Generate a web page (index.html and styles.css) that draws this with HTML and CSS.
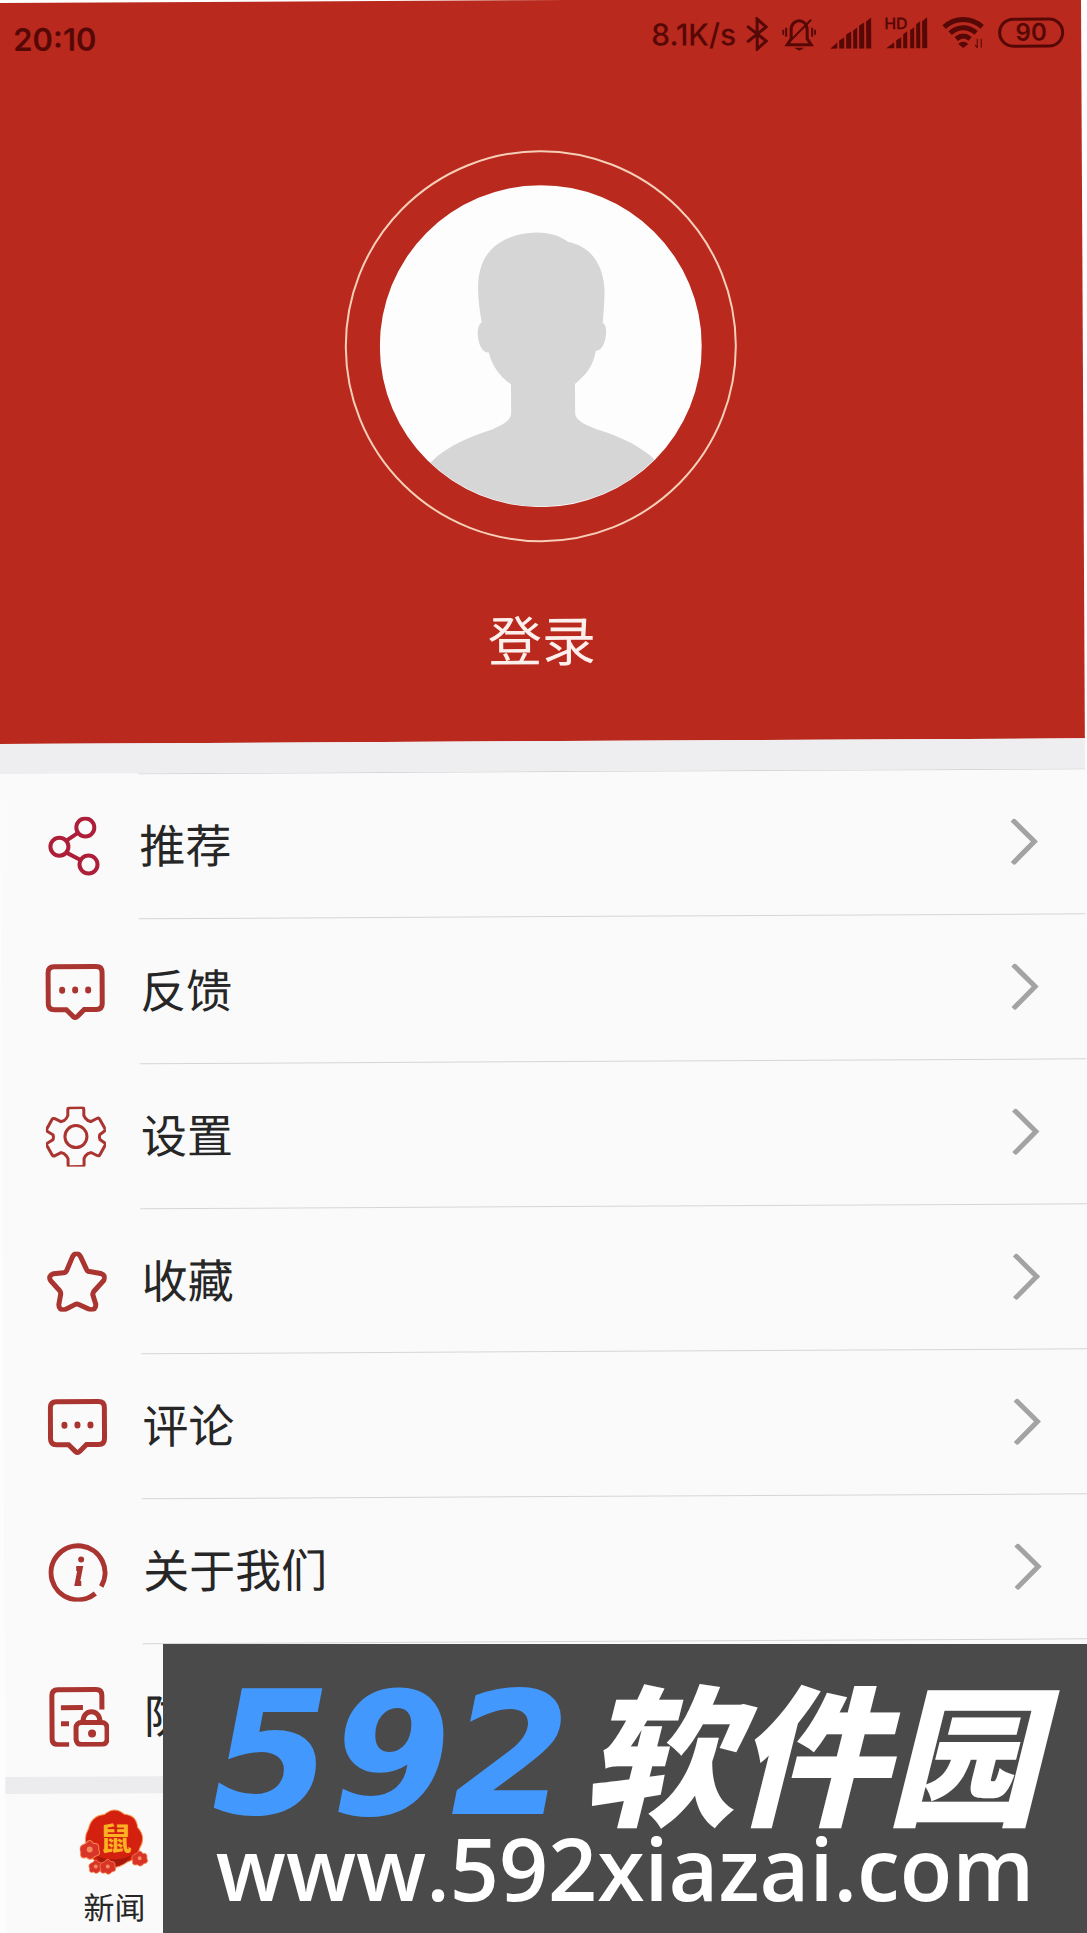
FILE: index.html
```
<!DOCTYPE html>
<html lang="zh-CN">
<head>
  <meta charset="UTF-8" />
  <meta name="viewport" content="width=device-width, initial-scale=1" />
  <title>我的</title>
  <link rel="stylesheet" href="styles.css">
</head>
<body>

  <div class="app">
    <header class="profile">
      <div class="status">
        <span class="time">20:10</span>
        <div class="status-icons">
          <span class="speed">8.1K/s</span>
          <svg width="22" height="34" viewBox="0 0 22 34" fill="none" stroke="currentColor" stroke-width="3"><path d="M1 9l19 15-9 8V2l9 8L1 25"/></svg>
          <svg width="34" height="34" viewBox="0 0 34 34" fill="none" stroke="currentColor" stroke-width="3"><path d="M9 22V13c0-12 16-12 16 0v9l4 6H5l4-6z"/><path d="M5 27L29 3M4 11v9M30 11v9M1 13v5M33 13v5" stroke-width="2"/><path d="M12 31h10l-5 3z" fill="currentColor" stroke="none"/></svg>
          <svg width="42" height="32" viewBox="0 0 42 32" fill="currentColor"><path d="M0 31l7-6v6zM9 31v-8l5-3v11zM16 31V17l5-3v17zM23 31V13l4-3v21zM29 31V8l5-3v26zM36 31V4l5-4v31z"/></svg>
          <span class="hd">
            <svg width="42" height="32" viewBox="0 0 42 32" fill="currentColor"><path d="M0 31l8-6v6zM10 31v-8l5-3v11zM17 31V17l4-3v17zM24 31V13l4-3v21zM30 31V7l4-3v27zM36 31V4l5-4v31z"/></svg>
            <small>HD</small>
          </span>
          <svg width="42" height="34" viewBox="0 0 42 34" fill="none" stroke="currentColor" stroke-width="5"><path d="M2 11c11-10 27-10 38 0M8 17c8-7 18-7 26 0M14 23c5-4 9-4 14 0"/><path d="M16 28c3-3 7-3 10 0l-5 4z" fill="currentColor" stroke="none"/><path d="M35 23v9M33 29l2 3M39 32v-9" stroke-width="1"/></svg>
          <span class="battery">90</span>
        </div>
      </div>

      <a class="login" href="#login">
        <span class="ring">
          <svg class="avatar" viewBox="0 0 322 322">
            <circle cx="161" cy="161" r="161" fill="#fdfdfd"/>
            <path fill="#d7d6d7" d="M50 277C66 260 90 251 112 244C122 240 131 235 131 228V199C121 192 112 181 109 167C102 168 98 157 98 148C98 142 100 138 102 137C96 102 97 80 112 64C130 46 168 41 189 57C210 61 224 78 225 105C225 117 224 127 223 138C226 140 227 144 226 151C225 160 221 166 216 166C213 182 206 190 195 199V228C195 236 208 241 218 245C243 253 262 263 274 275A161 161 0 0 1 50 277z"/>
          </svg>
        </span>
        <span class="login-text">登录</span>
      </a>
    </header>

    <nav class="menu">
      <a href="#share">
        <svg class="icon share" viewBox="0 0 60 60"><circle cx="15" cy="30" r="9"/><circle cx="41" cy="11" r="9"/><circle cx="44" cy="48" r="9"/><path d="M22 24L34 16M22 36l15 8"/></svg>
        <span>推荐</span>
        <svg class="arrow" viewBox="0 0 28 46"><path d="M2 1l22 22L2 45"/></svg>
      </a>
      <a href="#feedback">
        <svg class="icon" viewBox="0 0 60 60"><path d="M9 5h42q6 0 6 6v31q0 6-6 6H39l-7 7q-2 2-4 0l-7-7H9q-6 0-6-6V11q0-6 6-6z"/><path class="dots" d="M17 28v1M30 28v1M43 28v1"/></svg>
        <span>反馈</span>
        <svg class="arrow" viewBox="0 0 28 46"><path d="M2 1l22 22L2 45"/></svg>
      </a>
      <a href="#settings">
        <svg class="icon thin" viewBox="0 0 60 60"><path d="M24 1h12q2 0 2 2v6q1 3 4 5l3 1 6-3q2-1 3 1l5 9q1 2-1 3l-4 3q-1 2 0 5l4 3q2 1 1 3l-5 9q-1 2-3 1l-6-3-3 1q-3 2-4 5v6q0 2-2 2H24q-2 0-2-2v-6q-1-3-4-5l-3-1-6 3q-2 1-3-1l-5-9q-1-2 1-3l5-3q1-3 0-5l-5-3q-2-1-1-3l5-9q1-2 3-1l6 3 3-1q3-2 4-5V3q0-2 2-2z"/><circle cx="30" cy="30" r="11"/></svg>
        <span>设置</span>
        <svg class="arrow" viewBox="0 0 28 46"><path d="M2 1l22 22L2 45"/></svg>
      </a>
      <a href="#favorites">
        <svg class="icon" viewBox="0 0 60 60"><path d="M26 5q4-6 8 0l6 13q1 2 3 2l11 2q6 2 3 7L47 40q-1 2-1 3l3 10q0 6-6 5l-11-5q-2-1-4 0l-10 5q-6 1-6-5l2-11q0-2-1-3L4 29q-3-5 3-7l10-1q2 0 3-2z"/></svg>
        <span>收藏</span>
        <svg class="arrow" viewBox="0 0 28 46"><path d="M2 1l22 22L2 45"/></svg>
      </a>
      <a href="#comments">
        <svg class="icon" viewBox="0 0 60 60"><path d="M9 5h42q6 0 6 6v31q0 6-6 6H39l-7 7q-2 2-4 0l-7-7H9q-6 0-6-6V11q0-6 6-6z"/><path class="dots" d="M17 28v1M30 28v1M43 28v1"/></svg>
        <span>评论</span>
        <svg class="arrow" viewBox="0 0 28 46"><path d="M2 1l22 22L2 45"/></svg>
      </a>
      <a href="#about">
        <svg class="icon" viewBox="0 0 60 60"><path d="M53 45A27 27 0 1 0 47 52"/><path d="M28 27h4l-3 15h4" stroke-width="5"/><circle cx="33" cy="18" r="3" fill="currentColor" stroke="none"/></svg>
        <span>关于我们</span>
        <svg class="arrow" viewBox="0 0 28 46"><path d="M2 1l22 22L2 45"/></svg>
      </a>
      <a href="#protect">
        <svg class="icon" viewBox="0 0 60 60"><path d="M20 58H9q-6 0-6-6V9q0-6 6-6h38q6 0 6 6v14M12 21h22M12 37h8"/><rect x="27" y="36" width="31" height="22" rx="5"/><path d="M34 35c0-13 17-13 17 0"/><circle cx="43" cy="47" r="4" fill="currentColor" stroke="none"/></svg>
        <span>防</span>
        <svg class="arrow" viewBox="0 0 28 46"><path d="M2 1l22 22L2 45"/></svg>
      </a>
    </nav>

    <footer class="tabs">
      <a href="#news">
        <svg width="70" height="70" viewBox="0 0 70 70">
          <defs>
            <path id="flower" d="M-4-6Q0-12 4-6 10-7 9 0 12 6 5 7 1 12-3 8-10 10-9 3-12-4-4-6z"/>
          </defs>
          <path fill="#d3200f" stroke="#f79a55" d="M25 8q10-9 20 0 12 1 13 13 9 10 2 21-2 11-13 14-12 9-23 2-13-2-14-14-8-10-1-22 3-13 16-14z"/>
          <path fill="#a8180c" d="M16 49q20 8 36 0-4 9-17 11-14 1-19-11z"/>
          <text x="36" y="44" text-anchor="middle">鼠</text>
          <g fill="#d8342a" stroke="#f7894f">
            <use href="#flower" x="10" y="43"/>
            <use href="#flower" transform="translate(16 60) scale(.7)"/>
            <use href="#flower" transform="translate(28 60) scale(.8)"/>
            <use href="#flower" transform="translate(60 52) scale(.8)"/>
          </g>
          <g fill="#f58a5a">
            <circle cx="10" cy="43" r="3"/><circle cx="16" cy="60" r="2"/><circle cx="28" cy="60" r="2"/><circle cx="60" cy="52" r="2"/>
          </g>
        </svg>
        <span>新闻</span>
      </a>
    </footer>
  </div>

  <aside class="watermark">
    <div class="brand"><b>592</b><strong>软件园</strong></div>
    <div class="site">www.592xiazai.com</div>
  </aside>

</body>
</html>
```
FILE: styles.css
```
* {
  box-sizing: border-box;
}

body {
  margin: 0;
  height: 100vh;
  overflow: hidden;
  background: #fdfdfd;
  color: #262626;
  font-family: "Noto Sans CJK SC", sans-serif;
}

a {
  color: inherit;
  text-decoration: none;
}

.app {
  display: flex;
  flex-direction: column;
  height: calc(100vh - 3px);
  margin: 3px 6px 0 -4px;
  background: #fafafa;
  transform: rotate(-0.3deg);
  transform-origin: top left;
}

/* header */
.profile {
  flex: none;
  height: 741px;
  background: #b9291d;
}

.status {
  display: flex;
  justify-content: space-between;
  align-items: center;
  height: 64px;
  margin-bottom: 86px;
  padding: 8px 17px 0 17px;
  color: #560806;
  font-family: Inter, sans-serif;
  font-weight: 600;
}

.time {
  font-size: 31px;
}

.status-icons {
  display: flex;
  align-items: center;
  gap: 14px;
  padding-bottom: 2px;
}

.speed {
  margin-right: -4px;
  font-size: 30px;
  font-weight: 500;
}

.hd {
  position: relative;
  display: flex;
}

.hd small {
  position: absolute;
  top: -3px;
  left: -2px;
  font-size: 16px;
  line-height: 18px;
}

.battery {
  width: 66px;
  height: 30px;
  border: 3px solid;
  border-radius: 15px;
  font-size: 24px;
  line-height: 24px;
  text-align: center;
}

.login {
  display: flex;
  flex-direction: column;
  align-items: center;
}

.ring {
  display: flex;
  padding: 33px;
  border: 2px solid #f5cfb8;
  border-radius: 50%;
}

.avatar {
  width: 322px;
  height: 322px;
}

.login-text {
  margin-top: 57px;
  color: #fdf0ec;
  font-size: 54px;
  line-height: 78px;
}

/* menu */
.menu {
  flex: 1;
  min-height: 0;
  overflow: hidden;
  border-top: 30px solid #eeeef0;
}

.menu a {
  display: flex;
  align-items: center;
  height: 145px;
  padding: 0 47px 0 44px;
  font-size: 46px;
  background: linear-gradient(#d6d6d6, #d6d6d6) 138px 0 / 100% 1px no-repeat;
}

.menu span {
  padding-bottom: 6px;
}

.icon {
  width: 60px;
  height: 60px;
  margin-right: 35px;
  color: #a93430;
  fill: none;
  stroke: #a93430;
  stroke-width: 5;
}

.share {
  stroke: #ad1f38;
  stroke-width: 4;
}

.thin {
  stroke-width: 3;
}

.dots {
  stroke-width: 6;
  stroke-linecap: round;
}

.arrow {
  width: 28px;
  height: 46px;
  margin-left: auto;
  fill: none;
  stroke: #a3a3a3;
  stroke-width: 5;
}

/* bottom tabs */
.tabs {
  display: grid;
  grid-template-columns: repeat(5, 1fr);
  flex: none;
  height: 156px;
  border-top: 17px solid #ececee;
}

.tabs a {
  display: flex;
  flex-direction: column;
  align-items: center;
  padding-top: 13px;
  font-size: 31px;
  line-height: 60px;
}

.tabs text {
  fill: #fdb022;
  font-size: 32px;
  font-weight: bold;
}

/* watermark */
.watermark {
  position: fixed;
  right: 0;
  bottom: 0;
  width: 85%;
  height: 289px;
  padding-top: 40px;
  background: #4a4a4a;
  color: #fff;
}

.brand {
  display: flex;
  justify-content: center;
  align-items: baseline;
  gap: 12px;
  height: 130px;
  font-style: italic;
  line-height: 128px;
}

.brand b {
  color: #4398fd;
  font-family: "DejaVu Sans", sans-serif;
  font-size: 172px;
}

.brand strong {
  font-size: 152px;
  font-weight: 900;
}

.site {
  font-family: "Open Sans", sans-serif;
  font-size: 86px;
  font-weight: 600;
  line-height: 108px;
  text-align: center;
}
```
